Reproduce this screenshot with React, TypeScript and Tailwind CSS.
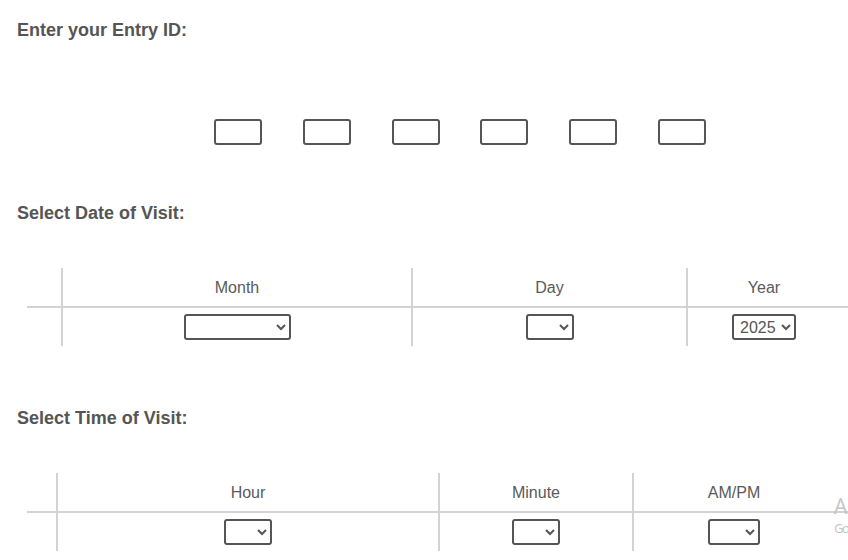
import React from "react";

const FONT = { fontFamily: '"Liberation Sans", Arial, sans-serif' };

type Col = { label: string; width: number; select: number; options?: string[] };

const DATE_COLS: Col[] = [
  { label: "Month", width: 350, select: 107 },
  { label: "Day", width: 275, select: 48 },
  { label: "Year", width: 154, select: 64, options: ["2025"] },
];

const TIME_COLS: Col[] = [
  { label: "Hour", width: 382, select: 48 },
  { label: "Minute", width: 194, select: 48 },
  { label: "AM/PM", width: 202, select: 52 },
];

function PickerTable({ lead, cols }: { lead: number; cols: Col[] }) {
  return (
    <div className="ml-[27px] w-[821px] text-[16px] text-[#5a5a5a]">
      {/* header row */}
      <div className="flex h-[40px] border-b-2 border-[#d2d2d7]">
        <div style={{ width: lead }} />
        {cols.map((c) => (
          <div
            key={c.label}
            style={{ width: c.width }}
            className="flex items-center justify-center border-l-2 border-[#d2d2d7] pt-[1px]"
          >
            {c.label}
          </div>
        ))}
      </div>
      {/* select row */}
      <div className="flex h-[38px]">
        <div style={{ width: lead }} />
        {cols.map((c) => (
          <div
            key={c.label}
            style={{ width: c.width }}
            className="flex items-center justify-center border-l-2 border-[#d2d2d7]"
          >
            <select
              defaultValue={c.options?.[0] ?? ""}
              style={{ width: c.select }}
              className="h-[26px] rounded-[3px] border-2 border-[#555] bg-white pl-[2px] text-[16px] text-[#555]"
            >
              {c.options ? (
                c.options.map((o) => <option key={o}>{o}</option>)
              ) : (
                <option value=""></option>
              )}
            </select>
          </div>
        ))}
      </div>
    </div>
  );
}

export default function App() {
  return (
    <div className="relative h-[560px] w-[848px] overflow-hidden bg-white" style={FONT}>
      <h2 className="ml-[17px] pt-[20px] text-[18px] font-bold leading-[21px] text-[#555]">
        Enter your Entry ID:
      </h2>

      <div className="ml-[214px] mt-[78px] flex gap-[40.8px]">
        {Array.from({ length: 6 }).map((_, i) => (
          <input
            key={i}
            type="text"
            maxLength={1}
            className="h-[26px] w-[48px] rounded-[3px] border-2 border-[#555] bg-white"
          />
        ))}
      </div>

      <h2 className="ml-[17px] mt-[58px] text-[18px] font-bold leading-[21px] text-[#555]">
        Select Date of Visit:
      </h2>
      <div className="mt-[44px]">
        <PickerTable lead={34} cols={DATE_COLS} />
      </div>

      <h2 className="ml-[17px] mt-[62px] text-[18px] font-bold leading-[21px] text-[#555]">
        Select Time of Visit:
      </h2>
      <div className="mt-[44px]">
        <PickerTable lead={29} cols={TIME_COLS} />
      </div>

      {/* clipped system watermark at the right edge */}
      <div
        className="absolute left-[834px] top-[494px] w-[14px] text-[#c4c4c4]"
        style={{ fontFamily: '"Open Sans", "Noto Sans", sans-serif' }}
      >
        <div className="text-[21px] leading-[24px]">A</div>
        <div className="text-[13px] leading-[20px] tracking-[-1.5px]">Go</div>
      </div>
    </div>
  );
}
